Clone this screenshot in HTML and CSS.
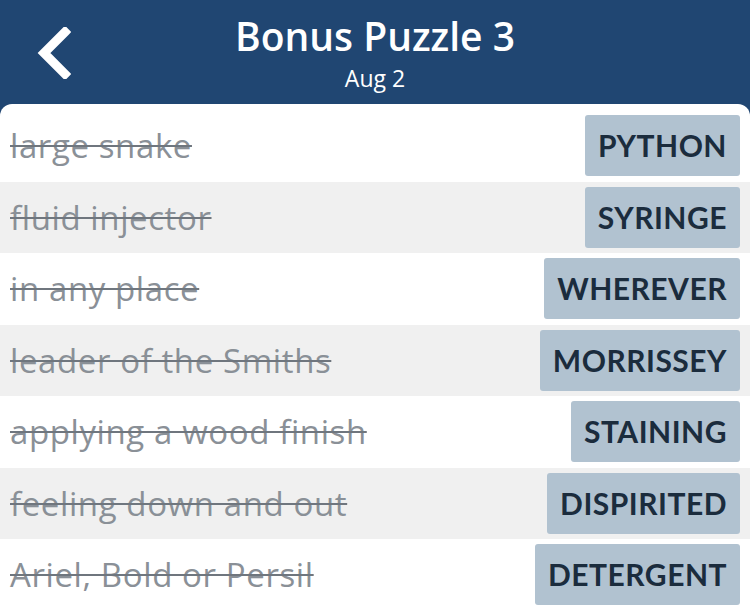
FILE: index.html
```html
<!DOCTYPE html>
<html lang="en">
<head>
    <meta charset="UTF-8">
    <meta name="viewport" content="width=device-width, initial-scale=1.0">
    <title>Bonus Puzzle 3</title>
    <link rel="stylesheet" href="styles.css">
</head>
<body>
    <div class="header">
        <div class="back">
            <svg width="36" height="52" viewBox="0 0 36 52">
                <path d="M30 5 L9 26 L30 47" fill="none" stroke="#fff" stroke-width="9" stroke-linecap="square"/>
            </svg>
        </div>
        <div class="title">
            <h1>Bonus Puzzle 3</h1>
            <div class="date">Aug 2</div>
        </div>
    </div>

    <div class="panel">
        <div class="row">
            <span class="clue">large snake</span>
            <span class="answer">PYTHON</span>
        </div>
        <div class="row">
            <span class="clue">fluid injector</span>
            <span class="answer">SYRINGE</span>
        </div>
        <div class="row">
            <span class="clue">in any place</span>
            <span class="answer">WHEREVER</span>
        </div>
        <div class="row">
            <span class="clue">leader of the Smiths</span>
            <span class="answer">MORRISSEY</span>
        </div>
        <div class="row">
            <span class="clue">applying a wood finish</span>
            <span class="answer">STAINING</span>
        </div>
        <div class="row">
            <span class="clue">feeling down and out</span>
            <span class="answer">DISPIRITED</span>
        </div>
        <div class="row">
            <span class="clue">Ariel, Bold or Persil</span>
            <span class="answer">DETERGENT</span>
        </div>
    </div>
</body>
</html>
```

FILE: styles.css
```css
body {
    margin: 0;
    padding: 0;
    background: #204672;
    font-family: 'Open Sans', 'Lato', sans-serif;
    height: 610px;
    overflow: hidden;
}
.header {
    height: 104px;
    display: flex;
    align-items: flex-start;
    position: relative;
}
.back {
    position: absolute;
    left: 35px;
    top: 27px;
}
.title {
    flex: 1;
    text-align: center;
    color: #fff;
}
h1 {
    margin: 11px 0 0;
    font-size: 39px;
    font-weight: 600;
    line-height: 50px;
}
.date {
    font-size: 23px;
    line-height: 28px;
    margin-top: 3px;
}
.panel {
    background: #fff;
    border-radius: 12px 12px 0 0;
    padding-top: 6px;
    height: 506px;
    box-sizing: border-box;
}
.row {
    height: 71.5px;
    display: flex;
    align-items: center;
    justify-content: space-between;
    padding: 0 10px;
}
.row:nth-child(even) {
    background: #f0f0f0;
}
.clue {
    color: #8a9097;
    font-size: 33px;
    letter-spacing: 0.6px;
    text-decoration: line-through;
    text-decoration-thickness: 2px;
    text-decoration-color: #6f767e;
}
.answer {
    font-family: 'Lato', sans-serif;
    background: #b1c2d0;
    color: #1b2c3d;
    font-weight: bold;
    font-size: 30px;
    letter-spacing: 0.5px;
    height: 61px;
    line-height: 61px;
    padding: 0 13px;
    border-radius: 3px;
}
```
